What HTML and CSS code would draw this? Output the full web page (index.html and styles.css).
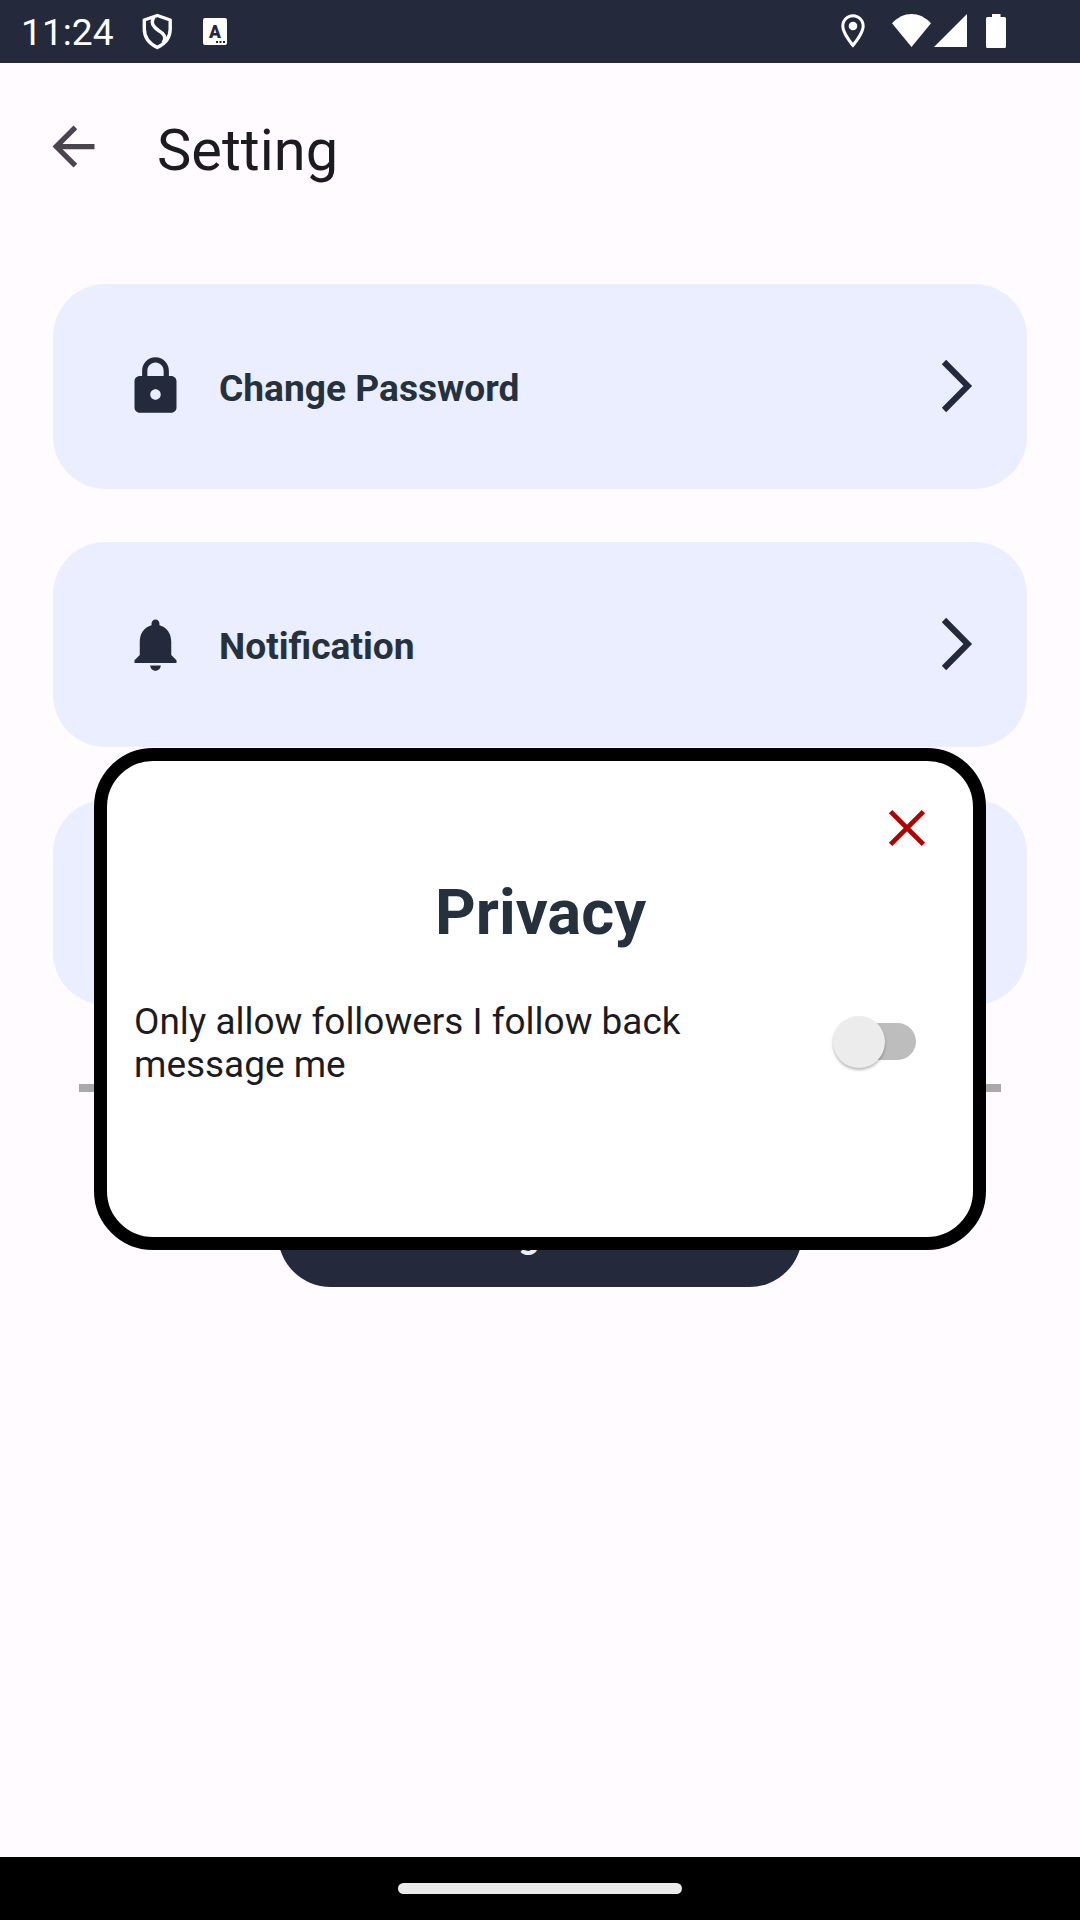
FILE: index.html
```html
<!DOCTYPE html>
<html lang="en">
<head>
<meta charset="utf-8">
<title>Setting</title>
<link rel="stylesheet" href="styles.css">
</head>
<body>
<div class="screen">
  <header class="status-bar">
    <span class="clock">11:24</span>
    <svg class="shield" width="32" height="38" viewBox="0 0 32 38"><path d="M16.300 3.500 L29.200 8 V17 C29.200 26 23.500 32 16.300 35.500 C9 32 3.300 26 3.300 17 V8 Z M13.500 4.500 C8.500 11 13 15.500 17.500 18.500 C24 22.500 25.500 26 22 31" fill="none" stroke="#fff" stroke-width="3.400" stroke-linejoin="round"/></svg>
    <svg class="letter-icon" width="24" height="27" viewBox="0 0 24 27"><rect width="24" height="27" rx="2" fill="#fff"/><text class="letter" x="12" y="20" text-anchor="middle">A</text><path d="M13 23h2v2h-2zM16.500 23h2v2h-2zM20 23h2v2h-2z" fill="#25293c"/></svg>
    <span class="spacer"></span>
    <svg class="pin" width="40" height="40" viewBox="0 0 24 24"><path fill="#fff" fill-rule="evenodd" d="M12 2C8.130 2 5 5.130 5 9c0 5.250 7 13 7 13s7-7.750 7-13c0-3.870-3.130-7-7-7zM6.800 9c0-2.870 2.330-5.200 5.200-5.200s5.200 2.330 5.200 5.200c0 2.880-3.080 7.390-5.200 10.080C9.920 16.410 6.800 11.850 6.800 9z"/><circle cx="12" cy="9" r="2.600" fill="#fff"/></svg>
    <svg class="wifi" width="39" height="33" viewBox="0 0 39 33"><path d="M0 9.300 C11.500 -3.100 27.500 -3.100 39 9.300 L19.500 33 Z" fill="#fff"/></svg>
    <svg class="signal" width="33" height="33" viewBox="0 0 33 33"><path d="M33 0V33H0Z" fill="#fff"/></svg>
    <svg class="battery" width="20" height="34" viewBox="0 0 20 34"><path d="M6 0h8.500v3H18.500a1.500 1.500 0 0 1 1.500 1.500v28a1.500 1.500 0 0 1-1.500 1.500h-17a1.500 1.500 0 0 1-1.500-1.500v-28a1.500 1.500 0 0 1 1.500-1.500H6z" fill="#fff"/></svg>
  </header>

  <div class="app-bar">
    <svg class="back" width="63" height="63" viewBox="0 0 24 24"><path fill="#49454f" d="M20 11H7.830l5.590-5.590L12 4l-8 8 8 8 1.410-1.410L7.830 13H20v-2z"/></svg>
    <h1 class="title">Setting</h1>
  </div>

  <main class="content">
    <div class="card">
      <svg class="card-icon" width="63" height="63" viewBox="0 0 24 24"><path fill="#25293c" d="M18 8h-.900V6c0-2.760-2.240-5.100-5.100-5.100S6.900 3.240 6.900 6v2H6c-1.100 0-2 .900-2 2v10c0 1.100.900 2 2 2h12c1.100 0 2-.900 2-2V10c0-1.100-.900-2-2-2zM12 17c-1.100 0-2-.900-2-2s.900-2 2-2 2 .900 2 2-.900 2-2 2zM15.100 8H8.900V6c0-1.710 1.390-3.100 3.100-3.100s3.100 1.390 3.100 3.100v2z"/></svg>
      <span class="label">Change Password</span>
      <svg class="chevron" width="34" height="54" viewBox="0 0 34 54"><path d="M4 3 L27.800 27 L4 51" fill="none" stroke="#25293c" stroke-width="6.100"/></svg>
    </div>
    <div class="card">
      <svg class="card-icon" width="63" height="63" viewBox="0 0 24 24"><path fill="#25293c" d="M12 22c1.100 0 2-.900 2-2h-4c0 1.100.890 2 2 2zM18 16v-5c0-3.070-1.640-5.640-4.500-6.320V4c0-.830-.670-1.500-1.500-1.500s-1.500.670-1.500 1.500v.680C7.630 5.360 6 7.920 6 11v5l-2 2v1h16v-1l-2-2z"/></svg>
      <span class="label">Notification</span>
      <svg class="chevron" width="34" height="54" viewBox="0 0 34 54"><path d="M4 3 L27.800 27 L4 51" fill="none" stroke="#25293c" stroke-width="6.100"/></svg>
    </div>
    <div class="card"></div>
    <hr class="divider">
    <button class="logout">Log out</button>
  </main>

  <footer class="nav-bar"><span class="handle"></span></footer>

  <section class="dialog">
    <svg class="close" width="40" height="40" viewBox="0 0 40 40"><path d="M3.600 3.600 L36.400 36.400 M36.400 3.600 L3.600 36.400" stroke="#b00000" stroke-width="4.800"/></svg>
    <h2 class="dialog-title">Privacy</h2>
    <div class="option">
      <p class="option-text">Only allow followers I follow back<br>message me</p>
      <span class="switch"><span class="thumb"></span></span>
    </div>
  </section>
</div>
</body>
</html>
```
FILE: styles.css
```css
* { box-sizing: border-box; }

body {
  margin: 0;
  font-family: Roboto, "Liberation Sans", sans-serif;
}

.screen {
  position: relative;
  display: flex;
  flex-direction: column;
  width: 1080px;
  height: 1920px;
  overflow: hidden;
  background: #fffbfe;
}

svg { display: block; flex: none; }

.status-bar {
  display: flex;
  align-items: flex-start;
  height: 63px;
  padding: 0 74px 0 21px;
  background: #25293c;
}

.clock {
  width: 120px;
  margin-top: 11px;
  color: #fff;
  font-size: 37.200px;
  line-height: 43px;
}

.shield { margin-top: 12px; }
.letter-icon { margin: 18px 0 0 30px; }

.letter {
  font-size: 17.500px;
  font-weight: 900;
  fill: #25293c;
}

.spacer { flex: 1; }
.pin { margin: 11px 19px 0 0; }
.wifi { margin: 14px 3px 0 0; }
.signal { margin: 14px 19px 0 0; }
.battery { margin-top: 14px; }

.app-bar {
  display: flex;
  align-items: center;
  height: 168px;
  padding-left: 42px;
}

.back { margin-bottom: 1px; }

.title {
  margin: 6px 0 0 52px;
  color: #1c1b1f;
  font-size: 57.750px;
  font-weight: 400;
  line-height: 68px;
}

.content {
  display: flex;
  flex: 1;
  flex-direction: column;
  align-items: center;
  padding: 53px 53px 0;
}

.card {
  display: flex;
  align-items: center;
  width: 974px;
  height: 205px;
  margin-bottom: 53px;
  padding: 0 53px 0 71px;
  border-radius: 52.500px;
  background: #eaeeff;
}

.chevron { margin-bottom: 1px; }

.label {
  flex: 1;
  margin: 4px 0 0 32px;
  color: #25323e;
  font-size: 37.150px;
  font-weight: 700;
  line-height: 43px;
}

.divider {
  width: 922px;
  height: 8px;
  margin: 26px 0 85px;
  border: 0;
  background: #a9a9a9;
}

.logout {
  width: 524px;
  height: 110px;
  padding: 4px 0 0;
  border: 0;
  border-radius: 52.500px;
  background: #25293c;
  color: #eaeeff;
  font: 700 37px Roboto, sans-serif;
}

.nav-bar {
  display: flex;
  justify-content: center;
  height: 63px;
  padding-top: 26px;
  background: #000;
}

.handle {
  width: 284px;
  height: 11px;
  border-radius: 6px;
  background: #ebebeb;
}

.dialog {
  position: absolute;
  top: 748px;
  left: 94px;
  display: flex;
  flex-direction: column;
  width: 892px;
  height: 502px;
  padding: 47px 57px 0 27px;
  border: 13px solid #000;
  border-radius: 59px;
  background: #fff;
}

.close { align-self: flex-end; margin-right: -11px; }

.dialog-title {
  margin: 27px -31px 0 0;
  color: #25323e;
  font-size: 63.300px;
  font-weight: 700;
  line-height: 74px;
  text-align: center;
}

.option {
  display: flex;
  align-items: center;
  justify-content: space-between;
  margin-top: 50px;
}

.option-text {
  margin: 1px 0 0;
  color: #1c1b1f;
  font-size: 36.950px;
  line-height: 43px;
}

.switch {
  display: flex;
  align-items: center;
  width: 75px;
  height: 37px;
  margin-bottom: 2px;
  border-radius: 18.500px;
  background: #bdbdbd;
}

.thumb {
  width: 52px;
  height: 52px;
  margin-left: -8px;
  border-radius: 50%;
  background: #ececec;
  box-shadow: 0 2px 3px rgba(0, 0, 0, 0.28);
}
```
